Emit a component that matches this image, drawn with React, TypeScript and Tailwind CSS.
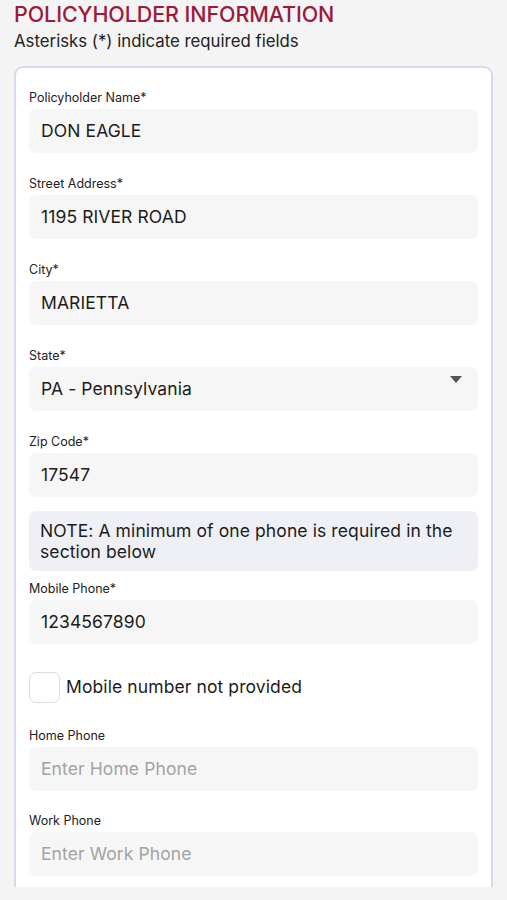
import React from "react";

const font = { fontFamily: "Inter, 'Noto Sans', sans-serif" };

function Field({ label, value, placeholder, select }: { label: string; value?: string; placeholder?: string; select?: boolean }) {
  return (
    <div className="flex flex-col">
      <div className="text-[12.5px] leading-[16px] text-[#222] h-[16px] mb-[3px]">{label}</div>
      <div className="relative h-[44px] rounded-[7px] bg-[#f6f6f6] flex items-center px-[12px]">
        {value ? (
          <span className="text-[17.5px] tracking-[0.1px] text-[#1c1c1c]">{value}</span>
        ) : (
          <span className="text-[17.5px] tracking-[0.1px] text-[#a3a3a3]">{placeholder}</span>
        )}
        {select && (
          <svg className="absolute right-[16px] top-[9px]" width="12" height="7" viewBox="0 0 12 7">
            <path d="M0 0 L12 0 L6 7 Z" fill="#555" />
          </svg>
        )}
      </div>
    </div>
  );
}

export default function App() {
  return (
    <div className="w-[507px] h-[900px] overflow-hidden bg-[#f4f4f4]" style={font}>
      <div className="px-[14px] pt-[1px]">
        <div className="text-[21.5px] leading-[26px] text-[#9c1b3b] font-medium tracking-[-0.1px]">POLICYHOLDER INFORMATION</div>
        <div className="text-[16.8px] leading-[20px] text-[#222] mt-[4px]">Asterisks (*) indicate required fields</div>
        <div className="mt-[15px] bg-white border-2 border-b-0 border-[#d4dcea] rounded-t-[9px] px-[13px] pt-[22px] pb-[11px] flex flex-col">
          <Field label="Policyholder Name*" value="DON EAGLE" />
          <div className="h-[23px]" />
          <Field label="Street Address*" value="1195 RIVER ROAD" />
          <div className="h-[23px]" />
          <Field label="City*" value="MARIETTA" />
          <div className="h-[23px]" />
          <Field label="State*" value="PA - Pennsylvania" select />
          <div className="h-[23px]" />
          <Field label="Zip Code*" value="17547" />
          <div className="h-[14px]" />
          <div className="rounded-[7px] bg-[#eef0f5] px-[11px] py-[9px] text-[17.5px] tracking-[0.1px] leading-[21px] text-[#1c1c1c]">
            NOTE: A minimum of one phone is required in the section below
          </div>
          <div className="h-[10px]" />
          <Field label="Mobile Phone*" value="1234567890" />
          <div className="h-[28px]" />
          <div className="flex items-center gap-[6px]">
            <div className="w-[31px] h-[31px] rounded-[7px] border border-[#dcdcdc] bg-white" />
            <span className="text-[17.5px] tracking-[0.1px] text-[#1c1c1c]">Mobile number not provided</span>
          </div>
          <div className="h-[25px]" />
          <Field label="Home Phone" placeholder="Enter Home Phone" />
          <div className="h-[22px]" />
          <Field label="Work Phone" placeholder="Enter Work Phone" />
        </div>
      </div>
    </div>
  );
}
